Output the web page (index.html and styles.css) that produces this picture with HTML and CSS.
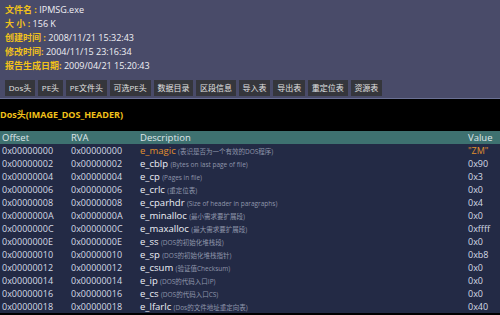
FILE: index.html
```html
<!DOCTYPE html>
<html lang="zh-CN">
<head>
  <meta charset="UTF-8">
  <title>PE 报告</title>
  <link rel="stylesheet" href="styles.css">
</head>
<body>

  <div class="summary">
    <div class="line"><span class="label">文件名 : </span>IPMSG.exe</div>
    <div class="line"><span class="label">大 小 : </span>156 K</div>
    <div class="line"><span class="label">创建时间 : </span>2008/11/21 15:32:43</div>
    <div class="line"><span class="label">修改时间:</span> 2004/11/15 23:16:34</div>
    <div class="line"><span class="label">报告生成日期:</span> 2009/04/21 15:20:43</div>

    <div class="tabs">
      <span class="tab">Dos头</span>
      <span class="tab">PE头</span>
      <span class="tab">PE文件头</span>
      <span class="tab">可选PE头</span>
      <span class="tab">数据目录</span>
      <span class="tab">区段信息</span>
      <span class="tab">导入表</span>
      <span class="tab">导出表</span>
      <span class="tab">重定位表</span>
      <span class="tab">资源表</span>
    </div>
  </div>

  <h3 class="section-title">Dos头(IMAGE_DOS_HEADER)</h3>

  <table class="fields">
    <thead>
      <tr>
        <th class="col-off">Offset</th>
        <th class="col-rva">RVA</th>
        <th>Description</th>
        <th class="col-val">Value</th>
      </tr>
    </thead>
    <tbody id="fieldRows"></tbody>
  </table>

  <script>
    // DOS header fields: offset, name, comment, value
    const fields = [
      ["0x00000000", "e_magic", "(表识是否为一个有效的DOS程序)", "\"ZM\""],
      ["0x00000002", "e_cblp", "(Bytes on last page of file)", "0x90"],
      ["0x00000004", "e_cp", "(Pages in file)", "0x3"],
      ["0x00000006", "e_crlc", "(重定位表)", "0x0"],
      ["0x00000008", "e_cparhdr", "(Size of header in paragraphs)", "0x4"],
      ["0x0000000A", "e_minalloc", "(最小需求要扩展段)", "0x0"],
      ["0x0000000C", "e_maxalloc", "(最大需求要扩展段)", "0xffff"],
      ["0x0000000E", "e_ss", "(DOS的初始化堆栈段)", "0x0"],
      ["0x00000010", "e_sp", "(DOS的初始化堆栈指针)", "0xb8"],
      ["0x00000012", "e_csum", "(验证值Checksum)", "0x0"],
      ["0x00000014", "e_ip", "(DOS的代码入口IP)", "0x0"],
      ["0x00000016", "e_cs", "(DOS的代码入口CS)", "0x0"],
      ["0x00000018", "e_lfarlc", "(Dos的文件地址重定向表)", "0x40"]
    ];

    const body = document.getElementById("fieldRows");
    fields.forEach((f, i) => {
      const row = document.createElement("tr");
      if (i === 0) row.className = "active";
      row.innerHTML = `
        <td>${f[0]}</td>
        <td>${f[0]}</td>
        <td><span class="name">${f[1]}</span> <span class="note">${f[2]}</span></td>
        <td class="val">${f[3]}</td>
      `;
      body.appendChild(row);
    });
  </script>
</body>
</html>
```

FILE: styles.css
```css
body {
  margin: 0;
  background-color: #000;
  font-family: "Open Sans", "Noto Sans CJK SC", sans-serif;
  font-size: 9px;
  color: #d4dae6;
}

.summary {
  background-color: #494b69;
  padding: 3px 0 2px 5px;
  border-bottom: 1px solid #6b7194;
}

.line {
  height: 14px;
  line-height: 14px;
  color: #f0f0f4;
}

.label {
  color: #f2c21a;
  font-weight: bold;
}

.tabs {
  display: flex;
  gap: 3px;
  margin-top: 7px;
}

.tab {
  background-color: #35363c;
  color: #e2e2e2;
  height: 16px;
  line-height: 16px;
  padding: 0 3.8px;
  font-size: 8px;
}

.section-title {
  margin: 0;
  height: 32px;
  line-height: 32px;
  color: #f2c21a;
  font-size: 9px;
  font-weight: bold;
}

.fields {
  width: 100%;
  border-collapse: collapse;
  table-layout: fixed;
}

.fields th {
  background-color: #3e7170;
  color: #dfe6ea;
  font-weight: normal;
  text-align: left;
  height: 13px;
  padding: 0 0 0 2px;
  font-size: 9.5px;
}

.fields td {
  background-color: #232a45;
  height: 13px;
  padding: 0 0 0 2px;
  white-space: nowrap;
  overflow: hidden;
}

.col-off { width: 67px; }
.col-rva { width: 67px; }
.col-val { width: 32px; }

.name {
  color: #eef0f6;
  font-size: 9.5px;
}

.note {
  color: #8f96ab;
  font-size: 6.5px;
}

.active .name,
.active .val {
  color: #e0902e;
}
```
